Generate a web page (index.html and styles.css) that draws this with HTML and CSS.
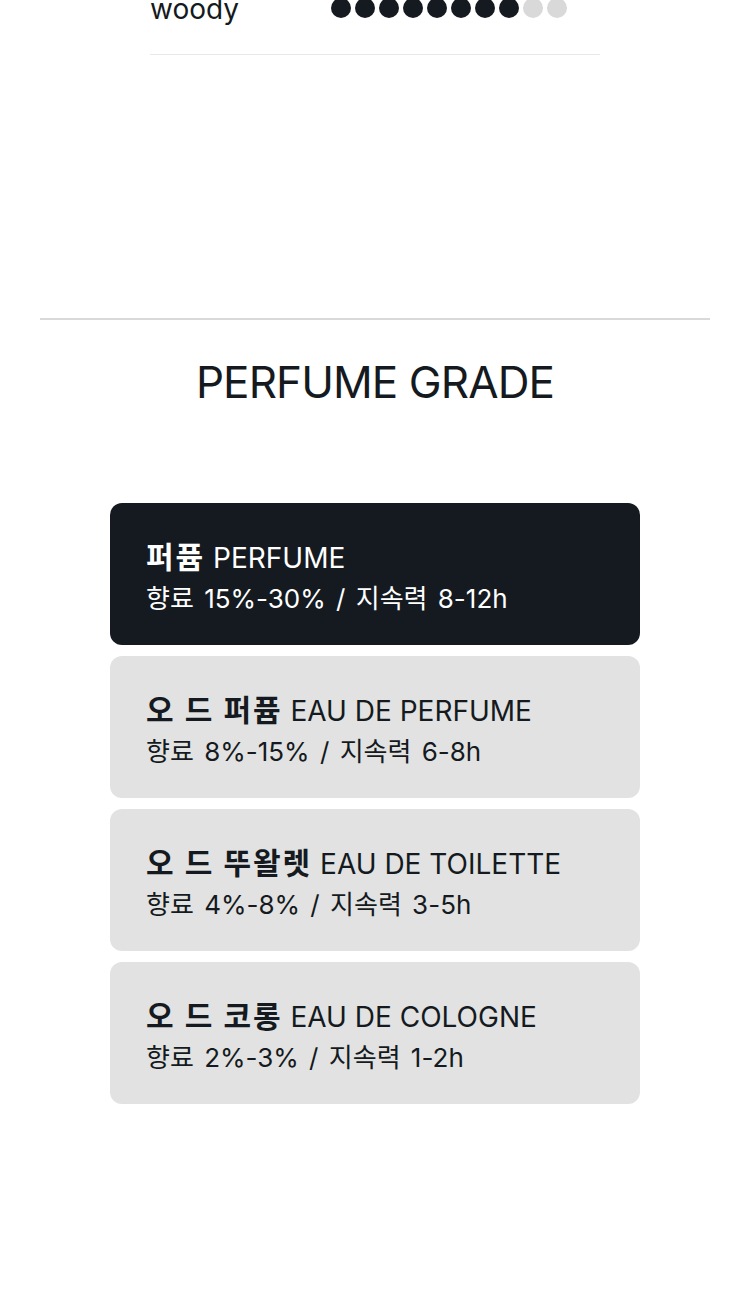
FILE: index.html
```html
<!DOCTYPE html>
<html lang="ko">
<head>
    <meta charset="UTF-8">
    <meta name="viewport" content="width=device-width, initial-scale=1.0">
    <title>Perfume Grade</title>
    <link rel="stylesheet" href="styles.css">
</head>
<body>
    <div class="notes">
        <div class="note-row">
            <span class="note-name">woody</span>
            <div class="dots">
                <span class="dot on"></span>
                <span class="dot on"></span>
                <span class="dot on"></span>
                <span class="dot on"></span>
                <span class="dot on"></span>
                <span class="dot on"></span>
                <span class="dot on"></span>
                <span class="dot on"></span>
                <span class="dot"></span>
                <span class="dot"></span>
            </div>
        </div>
    </div>

    <section class="grade">
        <h2>PERFUME GRADE</h2>
        <ul class="grade-list">
            <li class="grade-item active">
                <p class="grade-title"><strong>퍼퓸</strong> PERFUME</p>
                <p class="grade-desc">향료 15%-30% / 지속력 8-12h</p>
            </li>
            <li class="grade-item">
                <p class="grade-title"><strong>오 드 퍼퓸</strong> EAU DE PERFUME</p>
                <p class="grade-desc">향료 8%-15% / 지속력 6-8h</p>
            </li>
            <li class="grade-item">
                <p class="grade-title"><strong>오 드 뚜왈렛</strong> EAU DE TOILETTE</p>
                <p class="grade-desc">향료 4%-8% / 지속력 3-5h</p>
            </li>
            <li class="grade-item">
                <p class="grade-title"><strong>오 드 코롱</strong> EAU DE COLOGNE</p>
                <p class="grade-desc">향료 2%-3% / 지속력 1-2h</p>
            </li>
        </ul>
    </section>
</body>
</html>
```

FILE: styles.css
```css
body {
    margin: 0;
    font-family: "Inter", "Noto Sans CJK KR", sans-serif;
    color: #141a20;
    background: #fff;
}
.notes {
    width: 450px;
    margin: -39px auto 0;
    padding-bottom: 263px;
}
.note-row {
    display: flex;
    align-items: center;
    padding: 27px 0;
    border-bottom: 1px solid #e8e8e8;
    height: 39px;
}
.note-name {
    width: 181px;
    font-size: 28px;
    line-height: 39px;
    padding-top: 3px;
}
.dots {
    display: flex;
    gap: 4px;
}
.dot {
    width: 20px;
    height: 20px;
    border-radius: 50%;
    background: #d9d9d9;
}
.dot.on {
    background: #141a20;
}
.grade {
    margin: 0 40px;
    border-top: 2px solid #d9d9d9;
    padding-top: 36px;
}
.grade h2 {
    margin: 0 0 94px;
    font-size: 44px;
    font-weight: 400;
    line-height: 53px;
    letter-spacing: -0.9px;
    text-align: center;
}
.grade-list {
    list-style: none;
    margin: 0 auto;
    padding: 0;
    width: 530px;
    display: flex;
    flex-direction: column;
    gap: 11px;
}
.grade-item {
    box-sizing: border-box;
    height: 142px;
    background: #e2e2e2;
    border-radius: 12px;
    padding: 33px 36px 0;
}
.grade-item.active {
    background: #141a20;
    color: #fff;
}
.grade-item p {
    margin: 0;
    font-size: 26px;
    line-height: 42px;
    height: 42px;
}
.grade-item .grade-title {
    font-size: 28px;
}
.grade-title strong {
    font-size: 30px;
    font-weight: 700;
    letter-spacing: 2px;
}
.grade-desc {
    word-spacing: 3px;
}
```
